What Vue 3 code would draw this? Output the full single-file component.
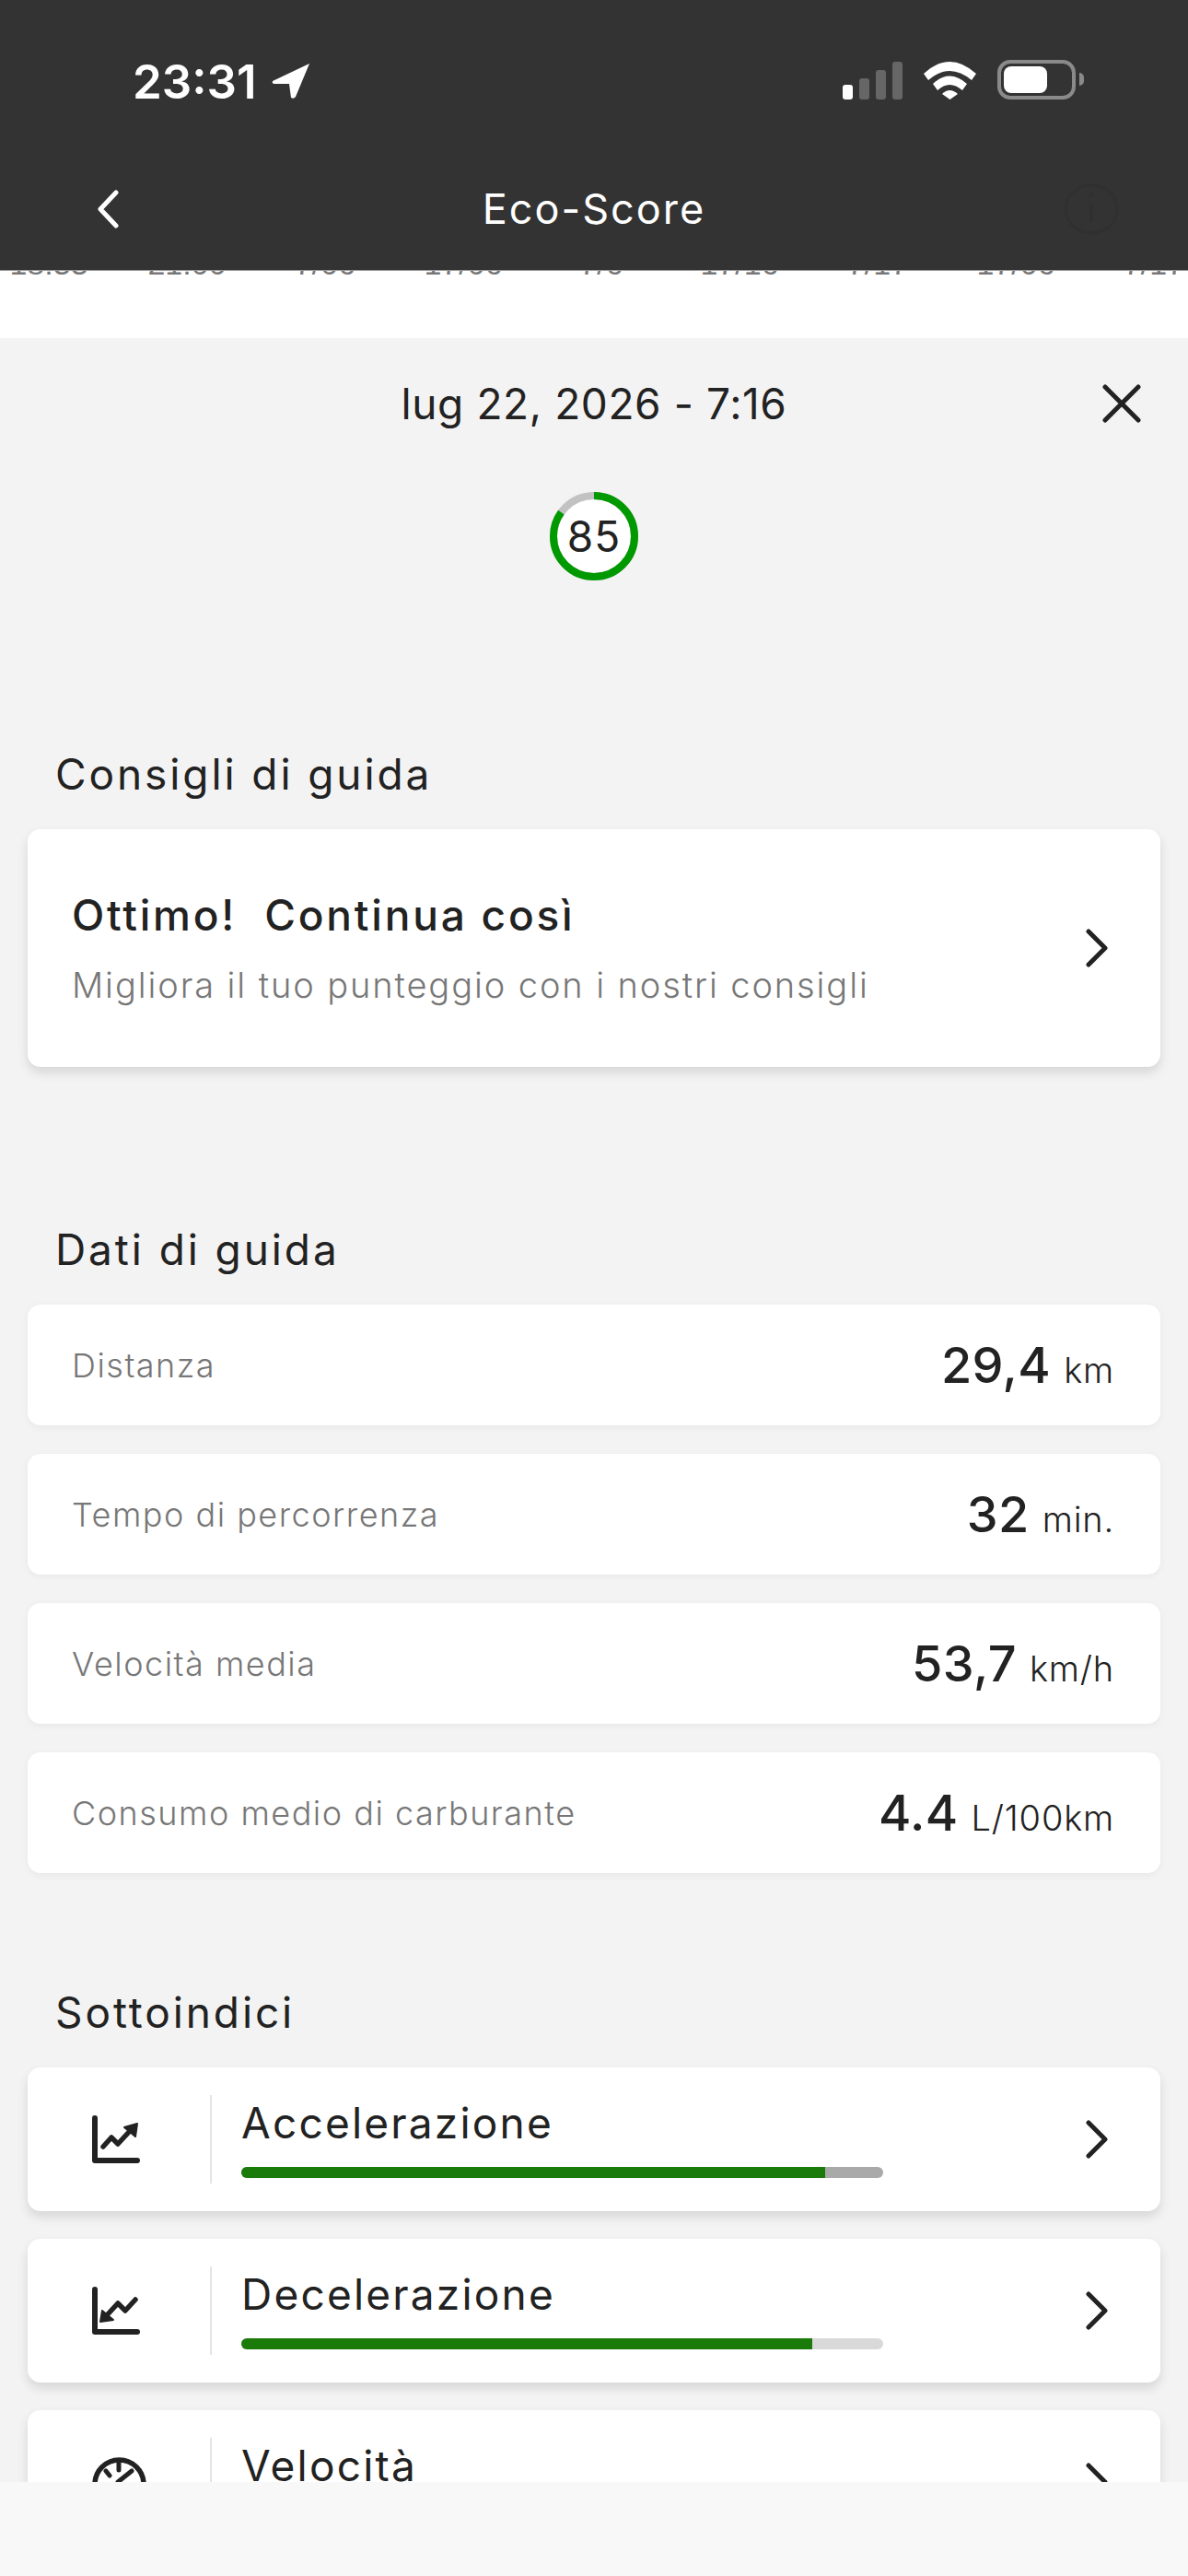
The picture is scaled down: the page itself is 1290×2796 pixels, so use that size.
<script setup>
const ticks = ["18:33", "21:00", "7/06", "17/06", "7/6", "17/16", "7/17", "17/06", "7/17"];

const drivingData = [
  { label: "Distanza", value: "29,4", unit: "km" },
  { label: "Tempo di percorrenza", value: "32", unit: "min." },
  { label: "Velocità media", value: "53,7", unit: "km/h" },
  { label: "Consumo medio di carburante", value: "4.4", unit: "L/100km" },
];

const subIndexes = [
  { name: "Accelerazione", icon: "up", score: 91, rest: "#a9a9a9" },
  { name: "Decelerazione", icon: "down", score: 89, rest: "#d9d9d9" },
  { name: "Velocità", icon: "gauge", score: 80, rest: "#d9d9d9" },
];
</script>

<template>
  <div class="page">
    <header class="topbar">
      <div class="status">
        <div class="clock">
          <span>23:31</span>
          <svg class="arrow" width="42" height="40" viewBox="0 0 42 40">
            <path d="M41 1 L1 20 Q0 23 3 23 L19 23 L21 38 Q24 40 26 37 Z" fill="#fff" />
          </svg>
        </div>
        <div class="indicators">
          <div class="signal">
            <i class="b1"></i><i class="b2"></i><i class="b3"></i><i class="b4"></i>
          </div>
          <svg width="57" height="42" viewBox="0 0 57 42">
            <path d="M0 14 Q28 -12 57 14 L52 21 Q28 1 5 21 Z" fill="#fff" />
            <path d="M10 25 Q28 8 47 25 L42 32 Q28 20 15 32 Z" fill="#fff" />
            <path d="M20 36 Q28 28 37 36 L28.500 42 Z" fill="#fff" />
          </svg>
          <div class="battery">
            <div class="battery-fill"></div>
            <div class="battery-nub"></div>
          </div>
        </div>
      </div>
      <nav class="navbar">
        <svg class="back" width="24" height="42" viewBox="0 0 24 42">
          <path d="M21 3 L4 21 L21 39" fill="none" stroke="#fff" stroke-width="5" stroke-linecap="round" stroke-linejoin="round" />
        </svg>
        <h1>Eco-Score</h1>
        <svg class="info" width="64" height="60" viewBox="0 0 64 60">
          <ellipse cx="32" cy="30" rx="28" ry="26" fill="none" stroke="#303030" stroke-width="3" />
          <path d="M32 24 V44 M32 12 V17" stroke="#303030" stroke-width="4" />
        </svg>
      </nav>
    </header>

    <div class="content">
      <div class="chart-strip">
        <span v-for="(t, i) in ticks" :key="i">{{ t }}</span>
      </div>

      <section class="trip">
        <div class="trip-head">
          <span class="trip-date">lug 22, 2026 - 7:16</span>
          <svg class="close" width="42" height="42" viewBox="0 0 42 42">
            <path d="M3 3 L39 39 M39 3 L3 39" stroke="#222" stroke-width="5" stroke-linecap="round" />
          </svg>
        </div>
        <div class="ring">
          <svg width="96" height="96" viewBox="0 0 96 96">
            <circle cx="48" cy="48" r="44" fill="#fff" stroke="#c2c2c2" stroke-width="8" />
            <circle cx="48" cy="48" r="44" fill="none" stroke="#009900" stroke-width="8" pathLength="100" stroke-dasharray="85 15" transform="rotate(-90 48 48)" />
          </svg>
          <span>85</span>
        </div>
      </section>

      <section class="tips">
        <h2>Consigli di guida</h2>
        <div class="card tip-card">
          <div>
            <div class="tip-title">Ottimo!&nbsp; Continua così</div>
            <div class="tip-sub">Migliora il tuo punteggio con i nostri consigli</div>
          </div>
          <svg class="chevron" width="24" height="42" viewBox="0 0 24 42">
            <path d="M3 3 L21 21 L3 39" fill="none" stroke="#222" stroke-width="5" stroke-linecap="round" stroke-linejoin="round" />
          </svg>
        </div>
      </section>

      <section class="driving">
        <h2>Dati di guida</h2>
        <div class="data-list">
          <div v-for="row in drivingData" :key="row.label" class="card data-row">
            <span class="data-label">{{ row.label }}</span>
            <span class="data-value">{{ row.value }}<small>{{ row.unit }}</small></span>
          </div>
        </div>
      </section>

      <section class="subindexes">
        <h2>Sottoindici</h2>
        <div class="sub-list">
          <div v-for="item in subIndexes" :key="item.name" class="card sub-card">
            <div class="sub-icon">
              <svg v-if="item.icon === 'up'" width="52" height="52" viewBox="0 0 52 52">
                <path d="M3 3 V49 H49" fill="none" stroke="#222" stroke-width="6" stroke-linecap="round" stroke-linejoin="round" />
                <path d="M12 34 L21 24 L28 31 L41 17" fill="none" stroke="#222" stroke-width="5.500" stroke-linecap="round" stroke-linejoin="round" />
                <path d="M35 13 L49 9 L47 23 Z" fill="#222" stroke="#222" stroke-width="2" stroke-linejoin="round" />
              </svg>
              <svg v-else-if="item.icon === 'down'" width="52" height="52" viewBox="0 0 52 52">
                <path d="M3 3 V49 H49" fill="none" stroke="#222" stroke-width="6" stroke-linecap="round" stroke-linejoin="round" />
                <path d="M47 14 L36 26 L28 18 L16 31" fill="none" stroke="#222" stroke-width="5.500" stroke-linecap="round" stroke-linejoin="round" />
                <path d="M11 26 L9 38 L23 36 Z" fill="#222" stroke="#222" stroke-width="2" stroke-linejoin="round" />
              </svg>
              <svg v-else class="gauge" width="60" height="60" viewBox="0 0 60 60">
                <circle cx="29.500" cy="29.500" r="26.500" fill="none" stroke="#222" stroke-width="5.500" />
                <path d="M29 5 V14 M15 15 L19 20 M43 15 L28 27" fill="none" stroke="#222" stroke-width="5" stroke-linecap="round" />
              </svg>
            </div>
            <div class="sub-body">
              <div class="sub-name">{{ item.name }}</div>
              <div class="bar" :style="{ background: item.rest }">
                <div class="bar-fill" :style="{ width: item.score + '%' }"></div>
              </div>
            </div>
            <svg class="chevron" width="24" height="42" viewBox="0 0 24 42">
              <path d="M3 3 L21 21 L3 39" fill="none" stroke="#222" stroke-width="5" stroke-linecap="round" stroke-linejoin="round" />
            </svg>
          </div>
        </div>
      </section>
    </div>

    <footer class="footer"></footer>
  </div>
</template>

<style>
html, body {
  margin: 0;
  background: #f3f3f3;
}
</style>

<style scoped>
.page {
  width: 1290px;
  height: 2796px;
  display: flex;
  flex-direction: column;
  overflow: hidden;
  background: #f3f3f3;
  font-family: Inter, "Open Sans", sans-serif;
  color: #222;
}

.topbar {
  height: 293px;
  flex: none;
  background: #333;
  color: #fff;
  border-bottom: 1px solid #999;
  display: flex;
  flex-direction: column;
  position: relative;
  z-index: 2;
}

.status {
  height: 176px;
  padding: 58px 122px 0 144px;
  box-sizing: border-box;
  display: flex;
  justify-content: space-between;
}

.clock {
  display: flex;
  align-items: center;
  gap: 16px;
  height: 60px;
  font-size: 51px;
  font-weight: 600;
}

.indicators {
  display: flex;
  align-items: flex-end;
  gap: 23px;
  height: 50px;
}

.signal {
  display: flex;
  align-items: flex-end;
  gap: 7px;
}

.signal i {
  display: block;
  width: 11px;
  border-radius: 3px;
  background: #666;
}

.signal .b1 {
  height: 16px;
  background: #fff;
}

.signal .b2 {
  height: 23px;
}

.signal .b3 {
  height: 32px;
}

.signal .b4 {
  height: 41px;
}

.battery {
  width: 85px;
  height: 43px;
  box-sizing: border-box;
  border: 4px solid #8a8a8a;
  border-radius: 14px;
  padding: 3px;
  position: relative;
}

.battery-fill {
  width: 47px;
  height: 29px;
  border-radius: 8px;
  background: #fff;
}

.battery-nub {
  position: absolute;
  right: -13px;
  top: 10px;
  width: 5px;
  height: 14px;
  border-radius: 0 5px 5px 0;
  background: #8a8a8a;
}

.navbar {
  flex: 1;
  display: grid;
  grid-template-columns: 1fr auto 1fr;
  align-items: center;
  padding-bottom: 16px;
}

.back {
  margin-left: 105px;
}

.info {
  justify-self: end;
  margin-right: 73px;
}

.navbar h1 {
  margin: 0;
  font-size: 45px;
  font-weight: 400;
  letter-spacing: 2px;
  color: #fff;
}

.content {
  flex: 1;
  min-height: 0;
  overflow: hidden;
}

.chart-strip {
  height: 73px;
  background: #fff;
  display: grid;
  grid-template-columns: repeat(9, 150px);
  overflow: hidden;
  font: 34px "Liberation Sans", sans-serif;
  color: #777;
  line-height: 1;
}

.chart-strip span {
  margin-top: -25px;
  margin-left: -22px;
  margin-right: 22px;
  text-align: center;
  white-space: nowrap;
}

.trip {
  height: 446px;
  display: flex;
  flex-direction: column;
  align-items: center;
}

.trip-head {
  width: 100%;
  height: 82px;
  padding-top: 30px;
  display: flex;
  justify-content: center;
  align-items: center;
  position: relative;
}

.trip-date {
  font-size: 46px;
  line-height: 54px;
  letter-spacing: 0.6px;
}

.close {
  position: absolute;
  right: 51px;
  top: 50px;
}

.ring {
  width: 96px;
  height: 96px;
  margin-top: 55px;
  position: relative;
  display: flex;
  align-items: center;
  justify-content: center;
}

.ring svg {
  position: absolute;
  inset: 0;
}

.ring span {
  position: relative;
  font-size: 46px;
  letter-spacing: 1px;
}

h2 {
  margin: 0;
  padding-left: 60px;
  font-size: 46px;
  line-height: 54px;
  font-weight: 400;
  letter-spacing: 2.9px;
}

.card {
  background: #fff;
  border-radius: 14px;
  margin: 0 30px;
  box-shadow: 0 6px 12px rgba(0, 0, 0, 0.12);
}

.tips h2 {
  margin-bottom: 33px;
}

.tip-card {
  height: 258px;
  padding: 0 57px 0 48px;
  display: flex;
  align-items: center;
  justify-content: space-between;
}

.tip-title {
  font-size: 46px;
  line-height: 56px;
  font-weight: 450;
  letter-spacing: 2.8px;
}

.tip-sub {
  margin-top: 24px;
  font-size: 38px;
  line-height: 48px;
  color: #777;
  font-weight: 300;
  letter-spacing: 1.9px;
}

.driving {
  margin-top: 171px;
}

.driving h2 {
  margin-bottom: 33px;
}

.data-list {
  display: flex;
  flex-direction: column;
  gap: 31px;
}

.data-row {
  height: 131px;
  padding: 0 50px 0 48px;
  display: flex;
  align-items: center;
  justify-content: space-between;
  box-shadow: 0 2px 8px rgba(0, 0, 0, 0.05);
}

.data-label {
  font-size: 36px;
  color: #777;
  font-weight: 300;
  letter-spacing: 1.5px;
}

.data-value {
  font-size: 54px;
  font-weight: 450;
  letter-spacing: 0.4px;
}

.data-value small {
  margin-left: 14px;
  font-size: 38px;
  font-weight: 300;
  letter-spacing: 0.8px;
}

.subindexes {
  margin-top: 124px;
}

.subindexes h2 {
  margin-bottom: 33px;
}

.sub-list {
  display: flex;
  flex-direction: column;
  gap: 30px;
}

.sub-card {
  height: 156px;
  flex: none;
  padding-right: 57px;
  display: flex;
  align-items: center;
}

.sub-icon {
  width: 200px;
  height: 96px;
  box-sizing: border-box;
  border-right: 2px solid #e4e4e4;
  padding-left: 70px;
  display: flex;
  align-items: center;
  flex: none;
}

.gauge {
  margin-top: 6px;
}

.sub-body {
  flex: 1;
  padding: 0 0 4px 32px;
}

.sub-name {
  font-size: 46px;
  line-height: 56px;
  letter-spacing: 2.2px;
}

.bar {
  width: 697px;
  height: 12px;
  margin-top: 20px;
  border-radius: 6px;
  overflow: hidden;
}

.bar-fill {
  height: 100%;
  background: #1a7a0a;
}

.footer {
  height: 102px;
  flex: none;
  background: #f8f8f8;
}
</style>
